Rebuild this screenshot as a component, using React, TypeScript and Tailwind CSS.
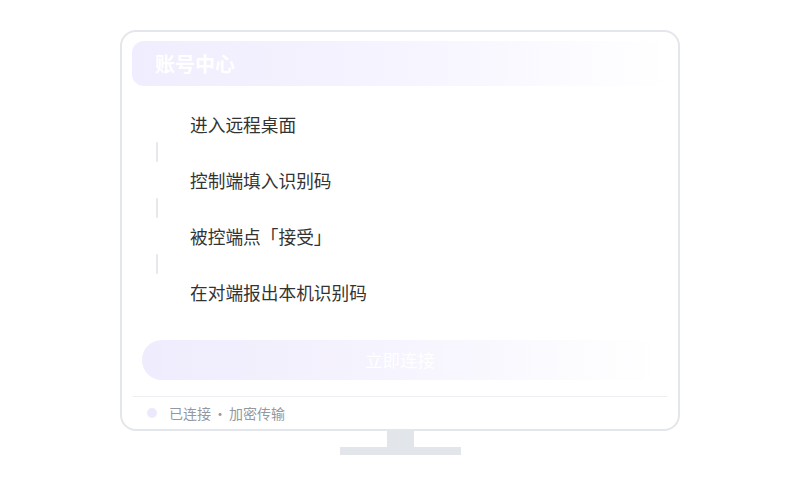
import React from "react";

const steps = ["进入远程桌面", "控制端填入识别码", "被控端点「接受」", "在对端报出本机识别码"];

export default function App() {
  return (
    <div
      className="w-full h-[500px] bg-white flex flex-col items-center pt-[30px]"
      style={{ fontFamily: '"Noto Sans CJK SC", "Noto Sans", sans-serif' }}
    >
      <div className="w-[560px] border-2 border-[#e3e6ea] rounded-[16px] bg-white flex flex-col px-[10px] pt-[9px]">
        <div className="h-[45px] rounded-[12px] bg-linear-to-r from-[#f0edfe] via-[#f6f4ff] to-white flex items-center pl-[23px]">
          <span className="text-[20px] font-bold text-white leading-none">账号中心</span>
        </div>

        <div className="mt-[27px] flex flex-col">
          {steps.map((s, i) => (
            <div key={s} className="flex flex-col">
              <div className="h-[24px] flex items-center pl-[58px] text-[17.7px] text-[#333333] leading-none">
                {s}
              </div>
              {i < steps.length - 1 && (
                <div className="pl-[24px] pt-[5px] pb-[7px]">
                  <div className="w-[2px] h-[20px] bg-[#e6e8ec] rounded-full" />
                </div>
              )}
            </div>
          ))}
        </div>

        <div className="mt-[35px] mx-[10px] h-[40px] rounded-full bg-linear-to-r from-[#efecfd] via-[#f6f4fe] to-white flex items-center justify-center">
          <span className="text-[17.5px] text-white leading-none">立即连接</span>
        </div>

        <div className="mt-[16px] h-px bg-[#eceef1] mx-[1px]" />

        <div className="h-[32px] flex items-center pl-[15px] gap-[12px]">
          <div className="w-[10px] h-[10px] rounded-full bg-[#ece9fd]" />
          <span className="text-[14px] text-[#94989f] leading-none">
            已连接<span className="mx-[2px]">·</span>加密传输
          </span>
        </div>
      </div>
      <div className="w-[27px] h-[16px] bg-[#e2e6ea]" />
      <div className="w-[121px] h-[8px] bg-[#e2e6ea]" />
    </div>
  );
}
